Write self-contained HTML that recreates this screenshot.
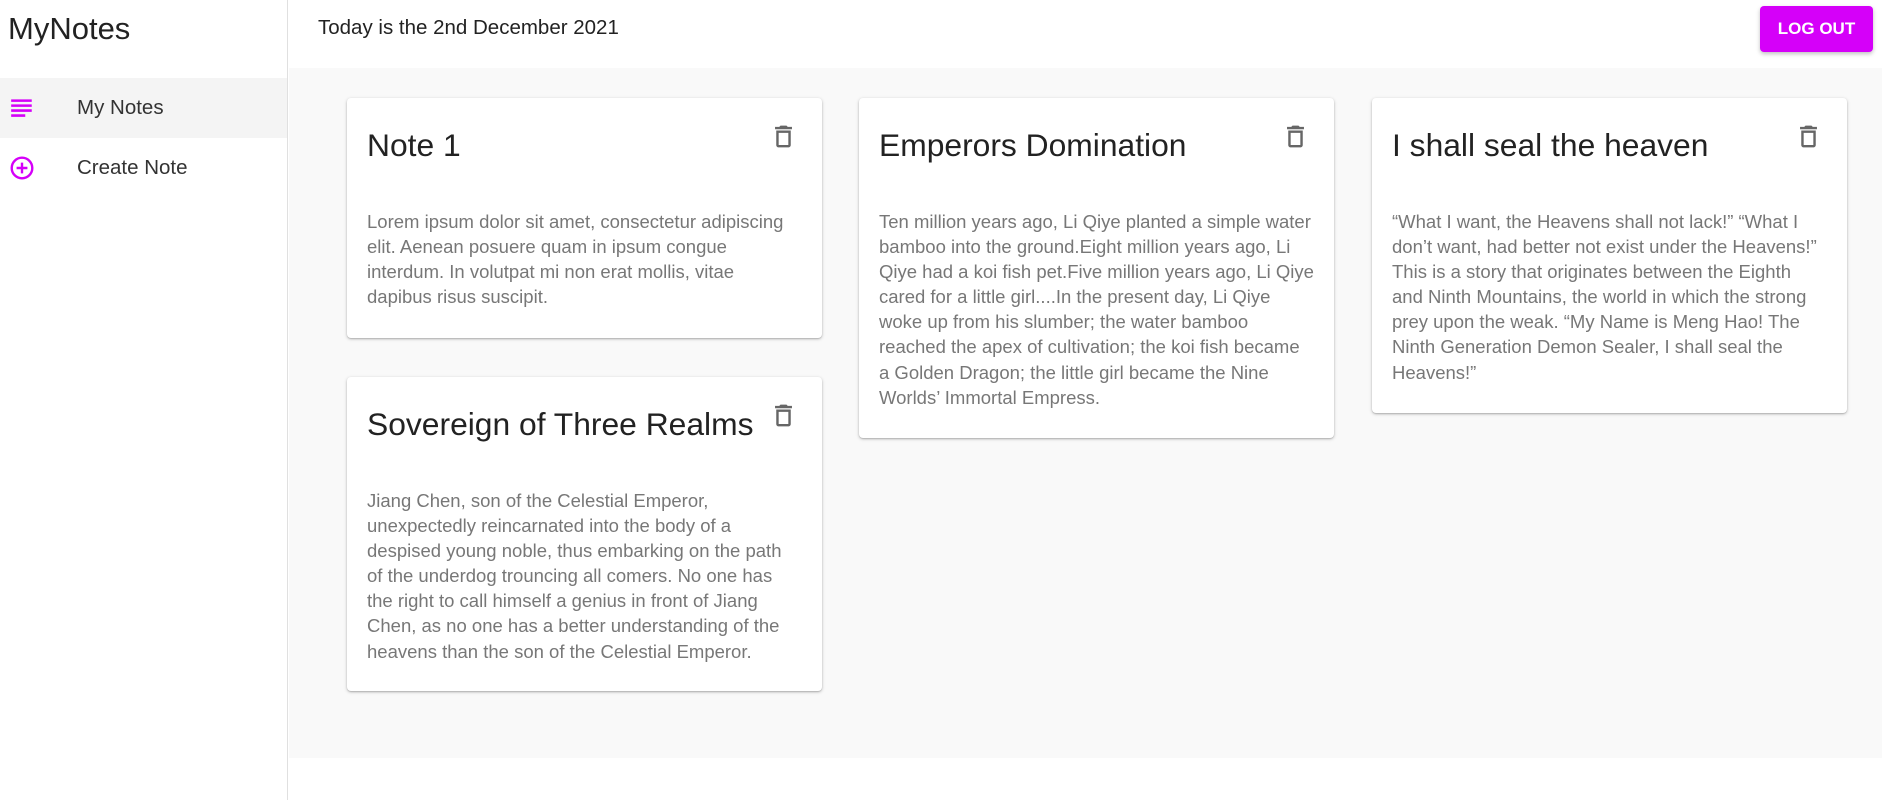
<!DOCTYPE html>
<html><head><meta charset="utf-8"><style>
*{box-sizing:border-box;margin:0;padding:0}
body{width:1882px;height:800px;font-family:"Liberation Sans",sans-serif;background:#fff;position:relative;overflow:hidden;color:#222}
.side{position:absolute;left:0;top:0;width:288px;height:800px;border-right:1px solid #e0e0e0;background:#fff}
.logo{position:absolute;left:8px;top:11px;font-size:31px;color:#222}
.nav{position:absolute;left:0;width:287px;height:60px;display:flex;align-items:center}
.nav span{position:absolute;left:77px;font-size:20.5px;color:#333}
.nav svg{position:absolute;left:9px}
.hdr{position:absolute;left:289px;top:0;right:0;height:68px;background:#fff}
.date{position:absolute;left:29px;top:16px;font-size:20.5px;color:#222}
.btn{position:absolute;left:1760px;top:6px;width:113px;height:46px;background:#d500f9;color:#fff;border-radius:4px;font-size:17px;font-weight:bold;display:flex;align-items:center;justify-content:center;box-shadow:0 2px 4px rgba(0,0,0,.25)}
.main{position:absolute;left:289px;top:68px;right:0;height:690px;background:#f9f9f9}
.card{position:absolute;background:#fff;border-radius:4px;box-shadow:0 1px 3px rgba(0,0,0,.25),0 1px 1px rgba(0,0,0,.12);width:475px}
.card h2{position:absolute;left:20px;top:29px;font-weight:normal;font-size:31.8px;color:#222;white-space:nowrap}
.card svg{position:absolute;left:422px;top:24px}
.card p{position:absolute;left:20px;top:111px;font-size:18.5px;line-height:25.1px;color:#777;white-space:nowrap}
</style></head><body>
<div class="side">
<div class="logo">MyNotes</div>
<div class="nav" style="top:78px;background:#f4f4f4">
<svg width="26" height="26" viewBox="0 0 24 24"><path fill="#d500f9" d="M2 4h19v2.4H2zM2 8.6h19V11H2zM2 13.2h19v2.4H2zM2 17.8h13v2.4H2z"/></svg><span>My Notes</span></div>
<div class="nav" style="top:138px">
<svg width="26" height="26" viewBox="0 0 24 24"><circle cx="12" cy="12" r="9.5" fill="none" stroke="#d500f9" stroke-width="2.2"/><path d="M12 7v10M7 12h10" stroke="#d500f9" stroke-width="2.2"/></svg><span>Create Note</span></div>
</div>
<div class="hdr"><div class="date">Today is the 2nd December 2021</div></div>
<div class="btn">LOG OUT</div>
<div class="main"></div>
<svg style="display:none"><symbol id="t" viewBox="0 0 24 24"><path fill="#666" d="M6 19c0 1.1.9 2 2 2h8c1.1 0 2-.9 2-2V7H6v12zm2-10h8v10H8V9zm7.5-5l-1-1h-5l-1 1H5v2h14V4z"/></symbol></svg>
<div class="card" style="left:347px;top:98px;height:240px"><h2>Note 1</h2><svg width="29" height="29"><use href="#t"/></svg>
<p>Lorem ipsum dolor sit amet, consectetur adipiscing<br>elit. Aenean posuere quam in ipsum congue<br>interdum. In volutpat mi non erat mollis, vitae<br>dapibus risus suscipit.</p></div>
<div class="card" style="left:347px;top:377px;height:314px"><h2>Sovereign of Three Realms</h2><svg width="29" height="29"><use href="#t"/></svg>
<p>Jiang Chen, son of the Celestial Emperor,<br>unexpectedly reincarnated into the body of a<br>despised young noble, thus embarking on the path<br>of the underdog trouncing all comers. No one has<br>the right to call himself a genius in front of Jiang<br>Chen, as no one has a better understanding of the<br>heavens than the son of the Celestial Emperor.</p></div>
<div class="card" style="left:859px;top:98px;height:340px"><h2>Emperors Domination</h2><svg width="29" height="29"><use href="#t"/></svg>
<p>Ten million years ago, Li Qiye planted a simple water<br>bamboo into the ground.Eight million years ago, Li<br>Qiye had a koi fish pet.Five million years ago, Li Qiye<br>cared for a little girl....In the present day, Li Qiye<br>woke up from his slumber; the water bamboo<br>reached the apex of cultivation; the koi fish became<br>a Golden Dragon; the little girl became the Nine<br>Worlds’ Immortal Empress.</p></div>
<div class="card" style="left:1372px;top:98px;height:315px"><h2>I shall seal the heaven</h2><svg width="29" height="29"><use href="#t"/></svg>
<p>“What I want, the Heavens shall not lack!” “What I<br>don’t want, had better not exist under the Heavens!”<br>This is a story that originates between the Eighth<br>and Ninth Mountains, the world in which the strong<br>prey upon the weak. “My Name is Meng Hao! The<br>Ninth Generation Demon Sealer, I shall seal the<br>Heavens!”</p></div>
</body></html>
